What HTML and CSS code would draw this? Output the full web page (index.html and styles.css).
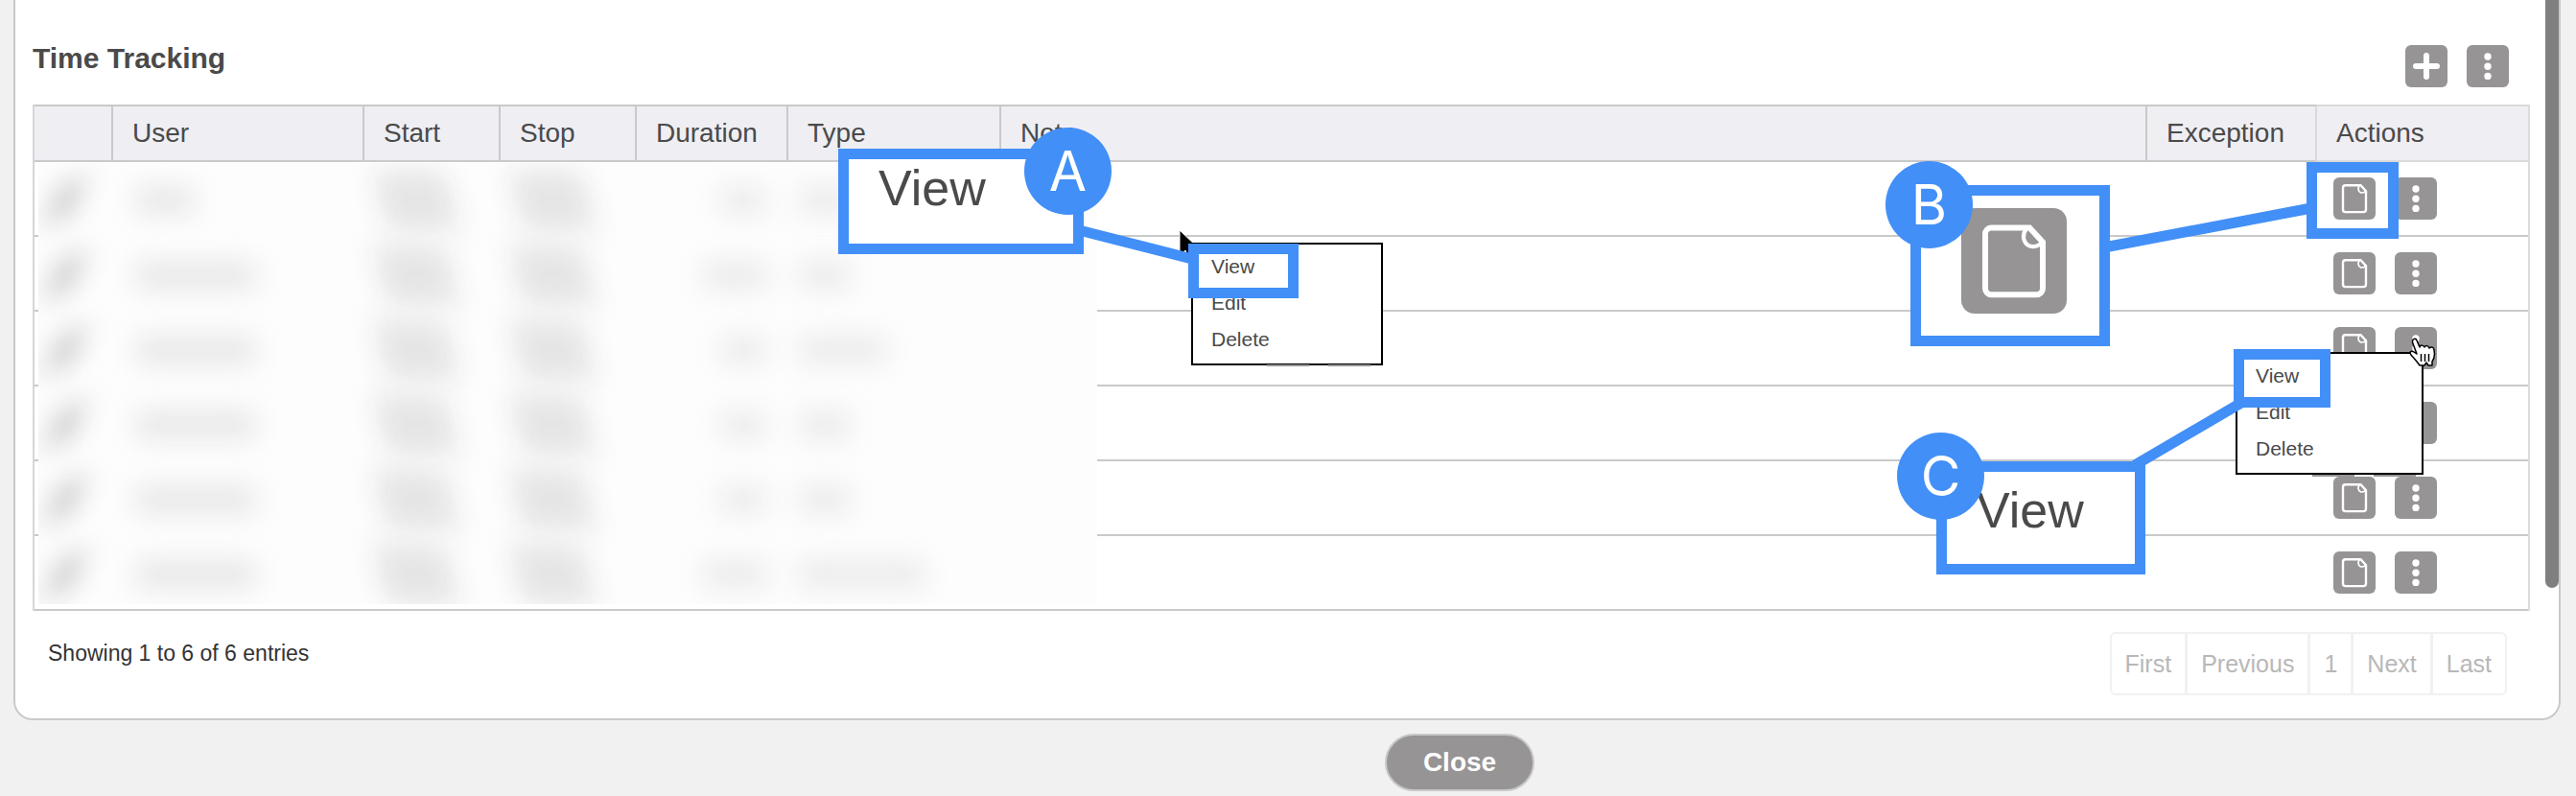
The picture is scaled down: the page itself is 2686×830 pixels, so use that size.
FILE: index.html
```
<!DOCTYPE html>
<html lang="en">
<head>
    <meta charset="UTF-8">
    <meta name="viewport" content="width=device-width, initial-scale=1.0">
    <title>Time Tracking</title>
    <link rel="stylesheet" href="styles.css">
</head>
<body>
    <svg class="symbols" aria-hidden="true">
        <symbol id="plus" viewBox="0 0 44 44">
            <path d="M22 11v22M11 22h22" fill="none" stroke="#fff" stroke-width="6" stroke-linecap="round"/>
        </symbol>
        <symbol id="dots" viewBox="0 0 44 44">
            <circle cx="22" cy="12" r="3.7" fill="#fff"/>
            <circle cx="22" cy="22.2" r="3.7" fill="#fff"/>
            <circle cx="22" cy="32.4" r="3.7" fill="#fff"/>
        </symbol>
        <symbol id="page" viewBox="0 0 44 44">
            <path d="M12.5 8.200h16l5.500 6V33.500a2.600 2.600 0 0 1-2.600 2.600h-18.800a2.600 2.600 0 0 1-2.600-2.600V10.800A2.600 2.600 0 0 1 12.500 8.200z" fill="none" stroke="#fff" stroke-width="2.400"/>
            <path d="M27.300 8.500c-2.600 3.200-1 7.500 2.700 7.500 1.400 0 2.900-.7 3.700-2" fill="none" stroke="#fff" stroke-width="1.700"/>
        </symbol>
    </svg>

    <div class="panel">
        <div class="panel_head">
            <h2>Time Tracking</h2>
            <div class="buttons">
                <button class="icon_button" aria-label="Add"><svg><use href="#plus"/></svg></button>
                <button class="icon_button" aria-label="More"><svg><use href="#dots"/></svg></button>
            </div>
        </div>

        <div class="table_box">
            <table>
                <colgroup>
                    <col class="col_check"><col class="col_user"><col class="col_time"><col class="col_time">
                    <col class="col_duration"><col class="col_type"><col><col class="col_exception"><col class="col_actions">
                </colgroup>
                <thead>
                    <tr><th></th><th>User</th><th>Start</th><th>Stop</th><th>Duration</th><th>Type</th><th>Note</th><th>Exception</th><th>Actions</th></tr>
                </thead>
                <tbody>
                    <tr><td colspan="8"></td><td><div class="buttons">
                        <button class="icon_button" aria-label="View"><svg><use href="#page"/></svg></button>
                        <button class="icon_button" aria-label="More"><svg><use href="#dots"/></svg></button>
                    </div></td></tr>
                    <tr><td colspan="8"></td><td><div class="buttons">
                        <button class="icon_button" aria-label="View"><svg><use href="#page"/></svg></button>
                        <button class="icon_button" aria-label="More"><svg><use href="#dots"/></svg></button>
                    </div></td></tr>
                    <tr><td colspan="8"></td><td><div class="buttons">
                        <button class="icon_button" aria-label="View"><svg><use href="#page"/></svg></button>
                        <button class="icon_button" aria-label="More"><svg><use href="#dots"/></svg></button>
                    </div></td></tr>
                    <tr><td colspan="8"></td><td><div class="buttons">
                        <button class="icon_button" aria-label="View"><svg><use href="#page"/></svg></button>
                        <button class="icon_button" aria-label="More"><svg><use href="#dots"/></svg></button>
                    </div></td></tr>
                    <tr><td colspan="8"></td><td><div class="buttons">
                        <button class="icon_button" aria-label="View"><svg><use href="#page"/></svg></button>
                        <button class="icon_button" aria-label="More"><svg><use href="#dots"/></svg></button>
                    </div></td></tr>
                    <tr><td colspan="8"></td><td><div class="buttons">
                        <button class="icon_button" aria-label="View"><svg><use href="#page"/></svg></button>
                        <button class="icon_button" aria-label="More"><svg><use href="#dots"/></svg></button>
                    </div></td></tr>
                </tbody>
            </table>

            <!-- private data, blurred out -->
            <div class="private" aria-hidden="true">
                <div class="private_row"><i class="tick"></i><i class="name short"></i><i class="time"></i><i class="time"></i><i class="hours short"></i><i class="type"></i></div>
                <div class="private_row"><i class="tick"></i><i class="name"></i><i class="time"></i><i class="time"></i><i class="hours"></i><i class="type"></i></div>
                <div class="private_row"><i class="tick"></i><i class="name"></i><i class="time"></i><i class="time"></i><i class="hours short"></i><i class="type medium"></i></div>
                <div class="private_row"><i class="tick"></i><i class="name"></i><i class="time"></i><i class="time"></i><i class="hours short"></i><i class="type"></i></div>
                <div class="private_row"><i class="tick"></i><i class="name"></i><i class="time"></i><i class="time"></i><i class="hours short"></i><i class="type"></i></div>
                <div class="private_row"><i class="tick"></i><i class="name"></i><i class="time"></i><i class="time"></i><i class="hours"></i><i class="type long"></i></div>
            </div>
        </div>

        <div class="panel_foot">
            <div class="info">Showing 1 to 6 of 6 entries</div>
            <div class="pages">
                <button>First</button><button>Previous</button><button>1</button><button>Next</button><button>Last</button>
            </div>
        </div>
        <div class="scrollbar"></div>
    </div>

    <div class="actions">
        <button class="close">Close</button>
    </div>

    <!-- callout A -->
    <div class="layer layer_left">
        <svg class="arrow" viewBox="0 0 24 36"><path d="M1 1v27l6-6 5 11 5-2-5-11h9z" fill="#000" stroke="#fff"/></svg>
        <div class="menu menu_a">
            <button>View</button>
            <button>Edit</button>
            <button>Delete</button>
        </div>
        <div class="mark mark_a"></div>
        <div class="callout callout_a">View</div>
        <svg class="lines" viewBox="0 0 1500 830">
            <path d="M1125 240L1243 270" stroke="#428ff7" stroke-width="11"/>
            <path d="M1321 381h44M1385 381h44" stroke="#969494" stroke-width="2"/>
        </svg>
        <div class="badge badge_a">A</div>
    </div>

    <!-- callouts B and C -->
    <div class="layer layer_right">
        <div class="menu menu_c">
            <button>View</button>
            <button>Edit</button>
            <button>Delete</button>
        </div>
        <svg class="hand" viewBox="0 0 28 32"><path d="M8 25L2 18c-2-3 0-5 3-3l3 2L3.500 5C3 1 7 0 8 3l3 7c1-3 4-2 5 0 1-2 4-2 5 1 2-2 5-1 5 2 1 5 1 8-2 12v4h-4l-2-3-2 3h-5z" fill="#fff" stroke="#000" stroke-width="1.500" stroke-linejoin="round"/><path d="M12.500 17v8M16.500 17v8M20.500 17v8" stroke="#000" stroke-width="1.500"/></svg>
        <div class="mark mark_b"></div>
        <div class="mark mark_c"></div>
        <div class="callout callout_b"><div class="big_icon"><svg><use href="#page"/></svg></div></div>
        <div class="callout callout_c">View</div>
        <svg class="lines" viewBox="1886 0 800 830">
            <path d="M2194 258L2410 217M2226 485L2337 420" stroke="#428ff7" stroke-width="11"/>
            <path d="M2411 496h44M2475 496h44" stroke="#969494" stroke-width="2"/>
        </svg>
        <div class="badge badge_b">B</div>
        <div class="badge badge_c">C</div>
    </div>
</body>
</html>
```
FILE: styles.css
```
*
{
    box-sizing: border-box;
}
body
{
    margin: 0;
    min-height: 100vh;
    position: relative;
    background-color: #f1f1f1;
    color: #4a4a4a;
    font-family: "Liberation Sans", Arial, sans-serif;
    font-size: 28px;
}
button
{
    font: inherit;
    color: inherit;
    margin: 0;
    padding: 0;
    border: 0;
    background: none;
    cursor: pointer;
}
.symbols
{
    display: none;
}
.panel
{
    position: relative;
    margin: 0 16px 0 14px;
    padding: 47px 30px 24px 18px;
    background-color: #fff;
    border: 2px solid #c9c9c9;
    border-top: 0;
    border-radius: 0 0 20px 20px;
}
.panel_head
{
    display: flex;
    justify-content: space-between;
    padding: 0 22px 18px 0;
}
h2
{
    margin: 0;
    font-size: 30px;
    line-height: 28px;
}
.buttons
{
    display: flex;
    gap: 20px;
}
.icon_button
{
    width: 44px;
    height: 44px;
    border-radius: 6px;
    background-color: #969494;
}
.icon_button svg
{
    display: block;
    width: 44px;
    height: 44px;
}
.table_box
{
    position: relative;
}
table
{
    width: 100%;
    table-layout: fixed;
    border-collapse: separate;
    border-spacing: 0;
    border-left: 2px solid #d6d6d6;
    border-right: 2px solid #dcdcdc;
}
th
{
    height: 60px;
    padding: 0 20px;
    text-align: left;
    font-weight: normal;
    background-color: #efeef3;
    border-top: 2px solid #c9c9c9;
    border-bottom: 2px solid #c9c9c9;
    border-right: 2px solid #c9c9c9;
}
th:nth-last-child(2)
{
    border-right-color: #dadada;
}
th:last-child
{
    border-color: #dadada;
    border-right: 0;
}
td
{
    height: 78px;
    padding: 0 17px;
    border-bottom: 2px solid #c9c9c9;
}
.col_check { width: 82px; }
.col_user { width: 262px; }
.col_time { width: 142px; }
.col_duration { width: 158px; }
.col_type { width: 222px; }
.col_exception { width: 177px; }
.col_actions { width: 220px; }
.private
{
    position: absolute;
    top: 61px;
    left: 6px;
    width: 1104px;
    height: 460px;
    overflow: hidden;
    background-color: #fdfdfd;
}
.private_row
{
    display: grid;
    grid-template-columns: 78px 262px 142px 142px 158px 322px;
    align-items: center;
    height: 78px;
}
.private_row i
{
    height: 28px;
    filter: blur(14px);
    background-color: #e6e6e6;
}
.private_row .tick
{
    width: 26px;
    height: 44px;
    margin-left: 15px;
    transform: skewX(-20deg);
    background-color: #cecece;
}
.private_row .name
{
    width: 124px;
    margin-left: 24px;
}
.private_row .name.short
{
    width: 60px;
}
.private_row .time
{
    width: 76px;
    height: 62px;
    margin-left: 16px;
    transform: skewX(12deg);
    background-color: #e5e5e5;
}
.private_row .hours
{
    width: 66px;
    margin-left: 70px;
    background-color: #eaeaea;
}
.private_row .hours.short
{
    width: 46px;
    margin-left: 88px;
}
.private_row .type
{
    width: 52px;
    margin-left: 12px;
    background-color: #eaeaea;
}
.private_row .type.medium
{
    width: 90px;
}
.private_row .type.long
{
    width: 130px;
}
.panel_foot
{
    display: flex;
    justify-content: space-between;
    align-items: flex-start;
    padding: 22px 24px 0 16px;
}
.info
{
    margin-top: 8px;
    font-size: 23px;
    line-height: 28px;
    color: #333;
}
.pages
{
    display: flex;
}
.pages button
{
    height: 66px;
    padding: 0 14px;
    font-size: 25px;
    color: #b8b8b8;
    border: 2px solid #f1f1f1;
    border-left-width: 1px;
}
.pages button:first-child
{
    border-left-width: 2px;
    border-radius: 6px 0 0 6px;
}
.pages button:last-child
{
    border-radius: 0 6px 6px 0;
}
.scrollbar
{
    position: absolute;
    top: 0;
    right: 0;
    width: 14px;
    height: 613px;
    border-radius: 0 0 7px 7px;
    background-color: #7f7f7f;
}
.actions
{
    display: flex;
    justify-content: center;
    padding: 14px 0 0 358px;
}
.close
{
    height: 60px;
    padding: 0 38px;
    font-weight: bold;
    color: #fff;
    background-color: #969494;
    border: 2px solid #c8c8c8;
    border-radius: 30px;
}

/* annotations over the page */
.layer
{
    position: absolute;
    top: 0;
    height: 830px;
}
.layer_left
{
    left: 0;
    width: 1500px;
}
.layer_right
{
    right: 0;
    width: 800px;
}
.lines
{
    position: absolute;
    top: 0;
    left: 0;
    width: 100%;
    height: 100%;
    pointer-events: none;
}
.menu
{
    position: absolute;
    display: flex;
    flex-direction: column;
    padding: 4px 19px 6px;
    font-size: 21px;
    background-color: #fff;
    border: 2px solid #000;
}
.menu button
{
    height: 38px;
    text-align: left;
}
.menu_a
{
    top: 253px;
    left: 1242px;
    width: 200px;
}
.menu_c
{
    top: 367px;
    left: 445px;
    width: 196px;
}
.mark, .callout
{
    position: absolute;
    border: 11px solid #428ff7;
}
.mark_a
{
    top: 254px;
    left: 1239px;
    width: 115px;
    height: 57px;
}
.mark_b
{
    top: 169px;
    left: 519px;
    width: 96px;
    height: 80px;
}
.mark_c
{
    top: 364px;
    left: 443px;
    width: 101px;
    height: 61px;
}
.callout
{
    padding-left: 31px;
    font-size: 52px;
    line-height: 60px;
    background-color: #fff;
}
.callout_a
{
    top: 155px;
    left: 874px;
    width: 256px;
    height: 110px;
}
.callout_b
{
    top: 193px;
    left: 106px;
    width: 208px;
    height: 168px;
    padding: 13px 0 0 42px;
}
.callout_c
{
    top: 481px;
    left: 133px;
    width: 218px;
    height: 118px;
    padding-top: 10px;
}
.big_icon
{
    width: 110px;
    height: 110px;
    border-radius: 14px;
    background-color: #969494;
}
.big_icon svg
{
    display: block;
    width: 110px;
    height: 110px;
}
.badge
{
    position: absolute;
    width: 91px;
    height: 91px;
    line-height: 91px;
    border-radius: 50%;
    text-align: center;
    font-family: Inter, "Liberation Sans", sans-serif;
    font-size: 57px;
    color: #fff;
    background-color: #428ff7;
}
.badge_a
{
    top: 133px;
    left: 1068px;
}
.badge_b
{
    top: 168px;
    left: 80px;
}
.badge_c
{
    top: 451px;
    left: 92px;
}
.arrow
{
    position: absolute;
    top: 239px;
    left: 1229px;
    width: 24px;
    height: 36px;
}
.hand
{
    position: absolute;
    top: 352px;
    left: 626px;
    width: 28px;
    height: 32px;
}
```
